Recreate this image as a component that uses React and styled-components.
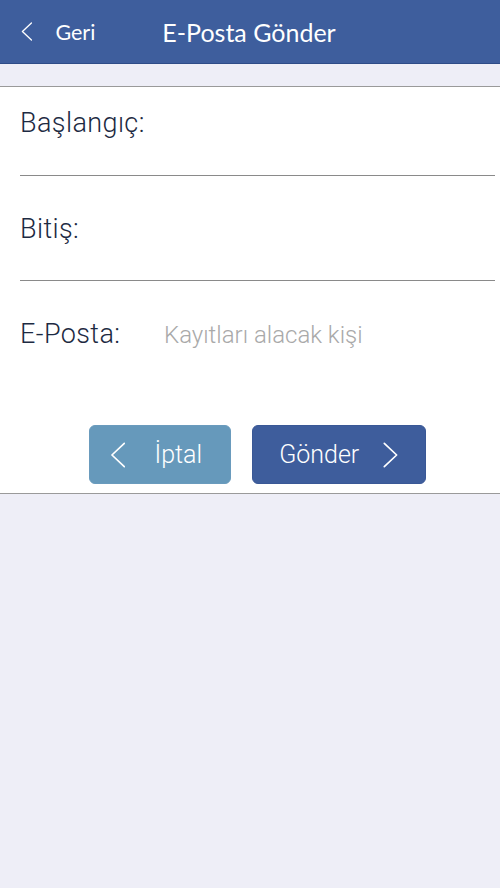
import styled, { createGlobalStyle } from "styled-components";

const Global = createGlobalStyle`
  html, body {
    margin: 0;
    padding: 0;
    background: #eeeef7;
  }
  body {
    font-family: Roboto, "Liberation Sans", sans-serif;
  }
`;

const Page = styled.div`
  min-height: 888px;
  background: #eeeef7;
`;

const Header = styled.header`
  height: 63px;
  background: #3e5e9d;
  border-bottom: 1px solid #2e4c88;
  display: flex;
  align-items: center;
  font-family: Lato, "Open Sans", sans-serif;
  color: #fff;
`;

const Back = styled.div`
  display: flex;
  align-items: center;
  padding-left: 21px;
  font-size: 21.5px;
  gap: 23px;
`;

const Title = styled.h1`
  margin: 0 0 0 67px;
  font-size: 25px;
  font-weight: 400;
`;

const Band = styled.div`
  height: 22px;
`;

const Panel = styled.section`
  background: #fff;
  border-top: 1px solid #9a9a9a;
  border-bottom: 1px solid #9a9a9a;
  padding: 0 5px 9px 20px;
`;

const Row = styled.div`
  height: ${(p) => p.h}px;
  padding-top: ${(p) => p.top}px;
  box-sizing: border-box;
  border-bottom: ${(p) => (p.last ? "none" : "1px solid #8a8a8a")};
  display: flex;
  align-items: flex-start;
`;

const Label = styled.span`
  font-size: 27px;
  font-weight: 300;
  letter-spacing: 0.4px;
  color: #1d2a42;
  width: 144px;
  flex-shrink: 0;
`;

const Input = styled.input`
  border: none;
  outline: none;
  padding: 0;
  font-family: inherit;
  font-size: 24px;
  font-weight: 300;
  color: #1d2a42;
  flex: 1;
  margin-top: 3px;
  &::placeholder {
    color: #a9a9a9;
  }
`;

const Buttons = styled.div`
  display: flex;
  justify-content: center;
  gap: 21px;
  padding-top: 34px;
`;

const Button = styled.button`
  width: ${(p) => p.w}px;
  height: 59px;
  border-radius: 6px;
  border: 1px solid ${(p) => (p.primary ? "#3a5896" : "#6a9bbd")};
  background: ${(p) => (p.primary ? "#3e5d9c" : "#6699bb")};
  color: #fff;
  font-family: Roboto, "Liberation Sans", sans-serif;
  font-size: 25px;
  font-weight: 300;
  display: flex;
  align-items: center;
  justify-content: center;
  gap: ${(p) => p.gap}px;
  padding: 0 ${(p) => p.shift || 0}px 0 0;
`;

const Chevron = ({ dir = "left", size = 18, w = 1.6 }) => (
  <svg width={size * 0.6} height={size} viewBox="0 0 12 20" fill="none">
    <path
      d={dir === "left" ? "M11 1 L1.5 10 L11 19" : "M1 1 L10.5 10 L1 19"}
      stroke="#fff"
      strokeWidth={w}
      strokeLinecap="round"
      strokeLinejoin="round"
    />
  </svg>
);

export default function App() {
  return (
    <Page>
      <Global />
      <Header>
        <Back>
          <Chevron size={19} w={1.4} />
          <span>Geri</span>
        </Back>
        <Title>E-Posta Gönder</Title>
      </Header>
      <Band />
      <Panel>
        <Row h={89} top={20}>
          <Label>Başlangıç:</Label>
        </Row>
        <Row h={105} top={37}>
          <Label>Bitiş:</Label>
        </Row>
        <Row h={110} top={37} last>
          <Label>E-Posta:</Label>
          <Input placeholder="Kayıtları alacak kişi" />
        </Row>
        <Buttons>
          <Button w={142} gap={29} shift={8}>
            <Chevron size={26} w={1.3} />
            <span>İptal</span>
          </Button>
          <Button w={174} gap={24} primary>
            <span>Gönder</span>
            <Chevron dir="right" size={26} w={1.3} />
          </Button>
        </Buttons>
      </Panel>
    </Page>
  );
}
